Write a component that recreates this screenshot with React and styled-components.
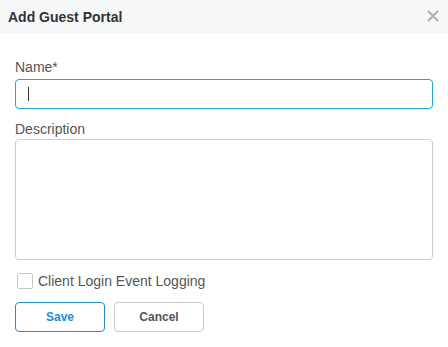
import React from "react";
import styled, { createGlobalStyle } from "styled-components";

const Global = createGlobalStyle`
  html, body { margin: 0; padding: 0; background: #fff; }
  body { font-family: "Liberation Sans", Arial, sans-serif; }
  * { box-sizing: border-box; }
`;

const Dialog = styled.div`
  width: 448px;
  height: 347px;
  background: #fff;
  display: flex;
  flex-direction: column;
`;

const Header = styled.div`
  height: 33px;
  background: #f6f7f9;
  display: flex;
  align-items: center;
  justify-content: space-between;
  padding: 0 9px 0 8px;
`;

const Title = styled.h1`
  margin: 0;
  font-size: 14px;
  font-weight: bold;
  color: #333;
`;

const Close = styled.button`
  border: 0;
  background: none;
  padding: 0;
  width: 12px;
  height: 12px;
  display: flex;
  cursor: pointer;
  margin-top: -2px;
`;

const Body = styled.div`
  padding: 26px 15px 0 15px;
  display: flex;
  flex-direction: column;
`;

const Label = styled.label`
  font-size: 14px;
  color: #555;
  line-height: 16px;
  display: block;
  margin-bottom: ${(p) => p.$mb || 4}px;
`;

const Input = styled.div`
  height: 30px;
  border: 1px solid ${(p) => (p.$focus ? "#1ba8e0" : "#ccc")};
  border-radius: 4px;
  display: flex;
  align-items: center;
  padding-left: 12px;
  margin-bottom: 12px;
`;

const Caret = styled.span`
  width: 1px;
  height: 14px;
  background: #333;
`;

const TextArea = styled.div`
  height: 121px;
  border: 1px solid #ccc;
  border-radius: 4px;
  margin-bottom: 13px;
`;

const CheckRow = styled.div`
  display: flex;
  align-items: center;
  gap: 5px;
  padding-left: 2px;
  margin-bottom: 13px;
`;

const Box = styled.span`
  width: 16px;
  height: 16px;
  border: 1px solid #c8c8c8;
  border-radius: 2px;
  background: #fff;
`;

const CheckText = styled.span`
  font-size: 14px;
  color: #555;
`;

const Actions = styled.div`
  display: flex;
  gap: 9px;
`;

const Button = styled.button`
  width: 90px;
  height: 30px;
  border-radius: 4px;
  background: #fff;
  font-family: "Liberation Sans", Arial, sans-serif;
  font-size: 12px;
  font-weight: bold;
  border: 1px solid ${(p) => (p.$primary ? "#1a8fd8" : "#c8c8c8")};
  color: ${(p) => (p.$primary ? "#1a8fd8" : "#555")};
  padding: 0;
`;

export default function App() {
  return (
    <>
      <Global />
      <Dialog>
        <Header>
          <Title>Add Guest Portal</Title>
          <Close aria-label="Close">
            <svg width="12" height="12" viewBox="0 0 12 12">
              <path d="M1 1L11 11M11 1L1 11" stroke="#b0b0b0" strokeWidth="2" />
            </svg>
          </Close>
        </Header>
        <Body>
          <Label $mb={4}>Name*</Label>
          <Input $focus>
            <Caret />
          </Input>
          <Label $mb={2}>Description</Label>
          <TextArea />
          <CheckRow>
            <Box />
            <CheckText>Client Login Event Logging</CheckText>
          </CheckRow>
          <Actions>
            <Button $primary>Save</Button>
            <Button>Cancel</Button>
          </Actions>
        </Body>
      </Dialog>
    </>
  );
}
